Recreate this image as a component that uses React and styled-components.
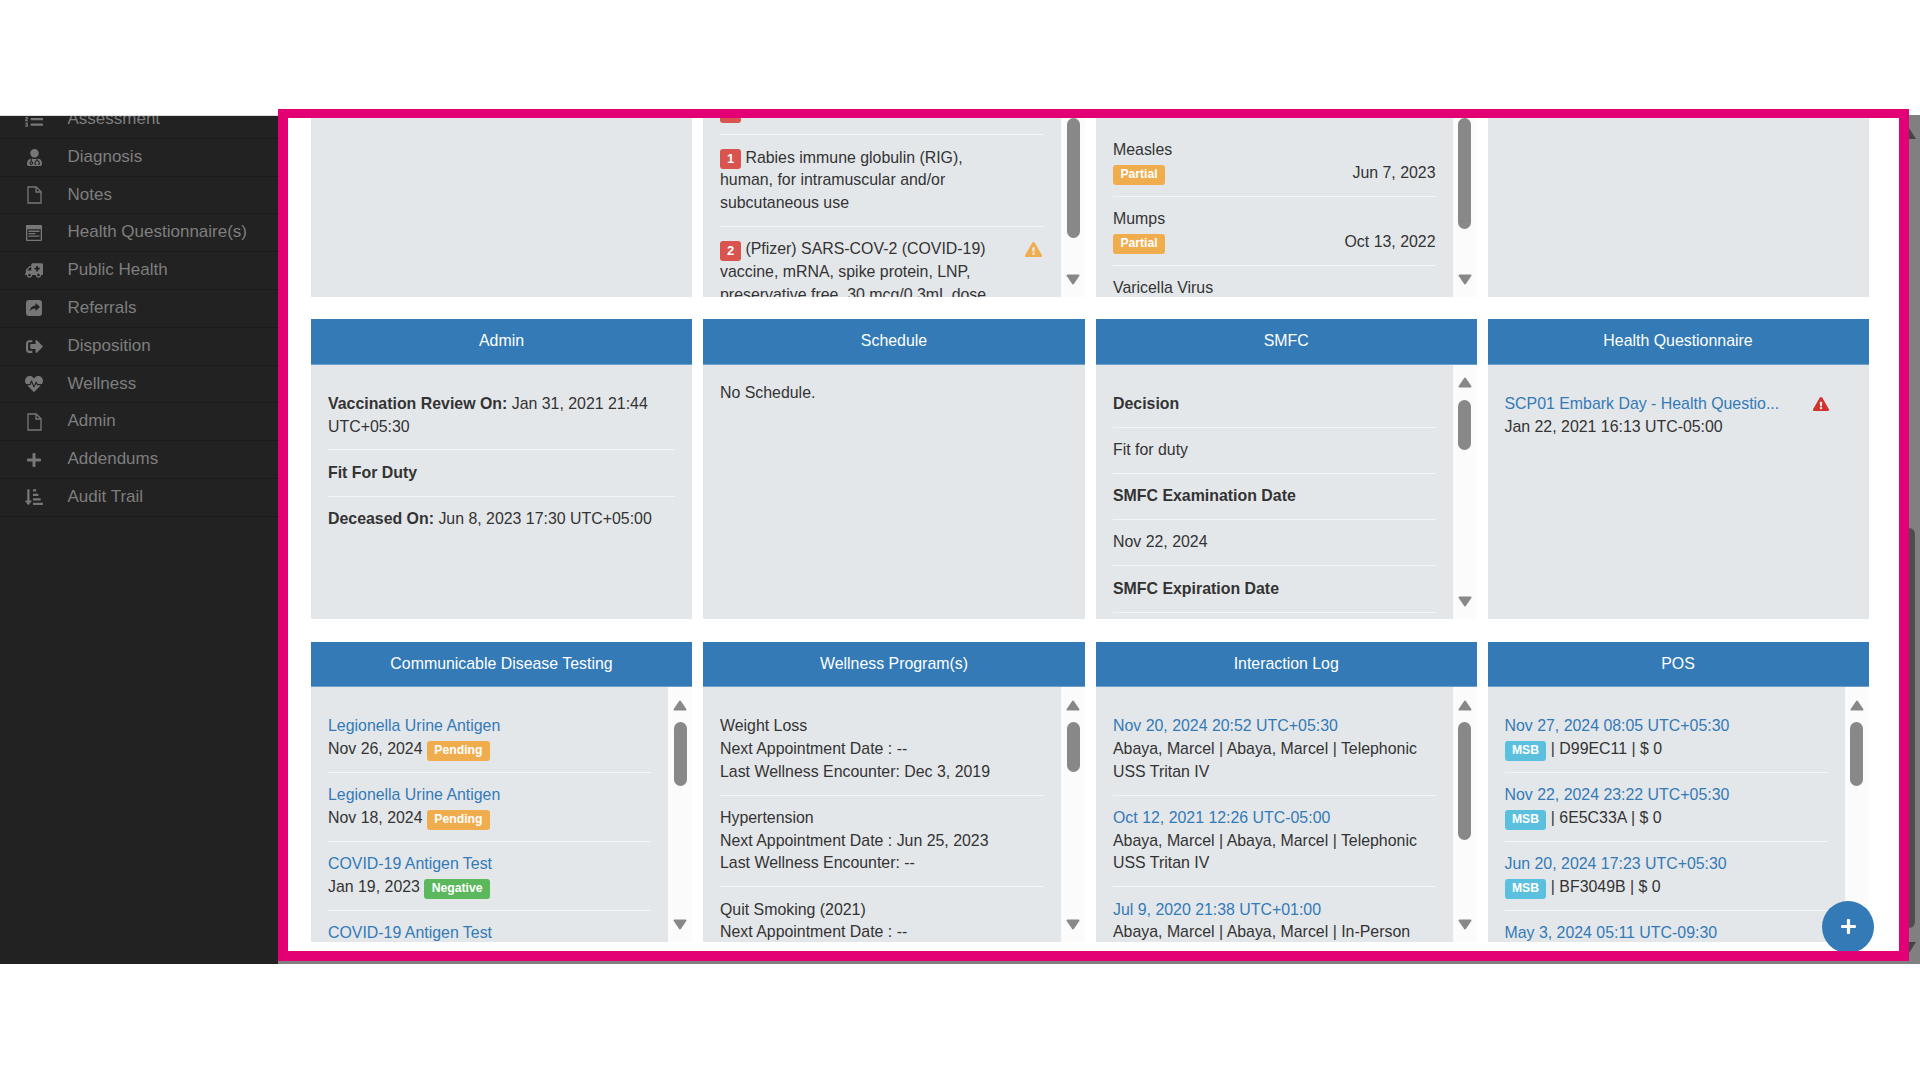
import styled, { createGlobalStyle } from "styled-components";
import {
  FaListOl,
  FaUserMd,
  FaAmbulance,
  FaSignOutAlt,
  FaHeartbeat,
  FaPlus,
  FaSortAmountDownAlt,
  FaExclamationTriangle,
} from "react-icons/fa";

function FileIcon() {
  return (
    <svg width="15" height="18" viewBox="0 0 15 18" fill="none" stroke="currentColor" strokeWidth="1.3">
      <path d="M1 1h8.2L14 5.8V17H1Z" />
      <path d="M9 1v5h5" />
    </svg>
  );
}

function FormIcon() {
  return (
    <svg width="16" height="16" viewBox="0 0 16 16" fill="currentColor">
      <path
        fillRule="evenodd"
        d="M1 0h14a1 1 0 0 1 1 1v14a1 1 0 0 1-1 1H1a1 1 0 0 1-1-1V1a1 1 0 0 1 1-1Zm.3 4.2v10.5h13.4V4.2Z"
      />
      <path d="M2.5 5.5h11v1.4h-11ZM2.5 8h7v1.2h-7ZM2.5 10.4h11v1.4h-11Z" />
    </svg>
  );
}

function ShareIcon() {
  return (
    <svg width="16" height="16" viewBox="0 0 16 16" fill="currentColor">
      <path
        fillRule="evenodd"
        d="M3 0h10a3 3 0 0 1 3 3v10a3 3 0 0 1-3 3H3a3 3 0 0 1-3-3V3a3 3 0 0 1 3-3Zm6.5 3v2.4C6 5.6 4 7.600 3.800 11.500 5 9.300 6.800 8.500 9.500 8.500V11L14 7Z"
      />
    </svg>
  );
}

function MirroredAmbulance() {
  return <FaAmbulance size={19} style={{ transform: "scaleX(-1)" }} />;
}

const menu = [
  { label: "Assessment", icon: <FaListOl size={18} /> },
  { label: "Diagnosis", icon: <FaUserMd size={17} /> },
  { label: "Notes", icon: <FileIcon /> },
  { label: "Health Questionnaire(s)", icon: <FormIcon /> },
  { label: "Public Health", icon: <MirroredAmbulance /> },
  { label: "Referrals", icon: <ShareIcon /> },
  { label: "Disposition", icon: <FaSignOutAlt size={17} /> },
  { label: "Wellness", icon: <FaHeartbeat size={18} /> },
  { label: "Admin", icon: <FileIcon /> },
  { label: "Addendums", icon: <FaPlus size={16} /> },
  { label: "Audit Trail", icon: <FaSortAmountDownAlt size={18} /> },
];

function Arrow({ down }) {
  return (
    <ArrowIcon viewBox="0 0 14 11" $down={down}>
      <path d="M7 1.5 L12.5 9.5 H1.5 Z" />
    </ArrowIcon>
  );
}

function Scroll({ thumb, clipped }) {
  return (
    <Rail>
      {!clipped && <Arrow />}
      <Thumb style={{ height: thumb }} $clipped={clipped} />
      <Arrow down />
    </Rail>
  );
}

function Panel({ title, thumb, clipped, children }) {
  return (
    <Card>
      {title && <CardHead>{title}</CardHead>}
      <CardBody>
        {children}
        {thumb && <Scroll thumb={thumb} clipped={clipped} />}
      </CardBody>
    </Card>
  );
}

export default function App() {
  return (
    <Page>
      <GlobalStyle />
      <Shell>
        <Sidebar>
          <SideList>
            {menu.map((item) => (
              <SideItem key={item.label}>
                <SideIcon>{item.icon}</SideIcon>
                {item.label}
              </SideItem>
            ))}
          </SideList>
        </Sidebar>

        <Main>
          <Content>
            <Board>
              <Panel />

              <Panel thumb={120} clipped>
                <ScrolledList>
                  <Item>
                    <NumberBadge>1</NumberBadge>
                  </Item>
                  <Item>
                    <Wrapped>
                      <NumberBadge>1</NumberBadge> Rabies immune globulin (RIG),
                      human, for intramuscular and/or subcutaneous use
                    </Wrapped>
                  </Item>
                  <Item>
                    <SplitRow $pad={2}>
                      <Wrapped>
                        <NumberBadge>2</NumberBadge> (Pfizer) SARS-COV-2
                        (COVID-19) vaccine, mRNA, spike protein, LNP,
                        preservative free, 30 mcg/0.3mL dose
                      </Wrapped>
                      <WarnIcon $color="#f0ad4e">
                        <FaExclamationTriangle size={17} />
                      </WarnIcon>
                    </SplitRow>
                  </Item>
                </ScrolledList>
              </Panel>

              <Panel thumb={111} clipped>
                <List $top={10}>
                  <Item>
                    Measles
                    <SplitRow>
                      <Label $kind="warning">Partial</Label>
                      <span>Jun 7, 2023</span>
                    </SplitRow>
                  </Item>
                  <Item>
                    Mumps
                    <SplitRow>
                      <Label $kind="warning">Partial</Label>
                      <span>Oct 13, 2022</span>
                    </SplitRow>
                  </Item>
                  <Item>Varicella Virus</Item>
                </List>
              </Panel>

              <Panel />

              <Panel title="Admin">
                <List>
                  <Item>
                    <b>Vaccination Review On:</b> Jan 31, 2021 21:44 UTC+05:30
                  </Item>
                  <Item>
                    <b>Fit For Duty</b>
                  </Item>
                  <Item>
                    <b>Deceased On:</b> Jun 8, 2023 17:30 UTC+05:00
                  </Item>
                </List>
              </Panel>

              <Panel title="Schedule">
                <Plain>No Schedule.</Plain>
              </Panel>

              <Panel title="SMFC" thumb={50}>
                <List>
                  <Item>
                    <b>Decision</b>
                  </Item>
                  <Item>Fit for duty</Item>
                  <Item>
                    <b>SMFC Examination Date</b>
                  </Item>
                  <Item>Nov 22, 2024</Item>
                  <Item>
                    <b>SMFC Expiration Date</b>
                  </Item>
                  <Item />
                </List>
              </Panel>

              <Panel title="Health Questionnaire">
                <List>
                  <Item>
                    <SplitRow $pad={23}>
                      <Link>SCP01 Embark Day - Health Questio...</Link>
                      <WarnIcon $color="#d2322d">
                        <FaExclamationTriangle size={16} />
                      </WarnIcon>
                    </SplitRow>
                    Jan 22, 2021 16:13 UTC-05:00
                  </Item>
                </List>
              </Panel>

              <Panel title="Communicable Disease Testing" thumb={64}>
                <List>
                  <Item>
                    <Link>Legionella Urine Antigen</Link>
                    <div>
                      Nov 26, 2024 <Label $kind="warning">Pending</Label>
                    </div>
                  </Item>
                  <Item>
                    <Link>Legionella Urine Antigen</Link>
                    <div>
                      Nov 18, 2024 <Label $kind="warning">Pending</Label>
                    </div>
                  </Item>
                  <Item>
                    <Link>COVID-19 Antigen Test</Link>
                    <div>
                      Jan 19, 2023 <Label $kind="success">Negative</Label>
                    </div>
                  </Item>
                  <Item>
                    <Link>COVID-19 Antigen Test</Link>
                  </Item>
                </List>
              </Panel>

              <Panel title="Wellness Program(s)" thumb={50}>
                <List>
                  <Item>
                    Weight Loss
                    <br />
                    Next Appointment Date : --
                    <br />
                    Last Wellness Encounter: Dec 3, 2019
                  </Item>
                  <Item>
                    Hypertension
                    <br />
                    Next Appointment Date : Jun 25, 2023
                    <br />
                    Last Wellness Encounter: --
                  </Item>
                  <Item>
                    Quit Smoking (2021)
                    <br />
                    Next Appointment Date : --
                  </Item>
                </List>
              </Panel>

              <Panel title="Interaction Log" thumb={118}>
                <List>
                  <Item>
                    <Link>Nov 20, 2024 20:52 UTC+05:30</Link>
                    <br />
                    Abaya, Marcel | Abaya, Marcel | Telephonic
                    <br />
                    USS Tritan IV
                  </Item>
                  <Item>
                    <Link>Oct 12, 2021 12:26 UTC-05:00</Link>
                    <br />
                    Abaya, Marcel | Abaya, Marcel | Telephonic
                    <br />
                    USS Tritan IV
                  </Item>
                  <Item>
                    <Link>Jul 9, 2020 21:38 UTC+01:00</Link>
                    <br />
                    Abaya, Marcel | Abaya, Marcel | In-Person
                  </Item>
                </List>
              </Panel>

              <Panel title="POS" thumb={64}>
                <List>
                  <Item>
                    <Link>Nov 27, 2024 08:05 UTC+05:30</Link>
                    <div>
                      <Label $kind="info">MSB</Label> | D99EC11 | $ 0
                    </div>
                  </Item>
                  <Item>
                    <Link>Nov 22, 2024 23:22 UTC+05:30</Link>
                    <div>
                      <Label $kind="info">MSB</Label> | 6E5C33A | $ 0
                    </div>
                  </Item>
                  <Item>
                    <Link>Jun 20, 2024 17:23 UTC+05:30</Link>
                    <div>
                      <Label $kind="info">MSB</Label> | BF3049B | $ 0
                    </div>
                  </Item>
                  <Item>
                    <Link>May 3, 2024 05:11 UTC-09:30</Link>
                  </Item>
                </List>
              </Panel>
            </Board>
          </Content>

          <PageRail>
            <PageArrowUp />
            <PageThumb />
            <PageArrowDown />
          </PageRail>

          <Fab>
            <FaPlus size={17} />
          </Fab>
          <Highlight />
        </Main>
      </Shell>
    </Page>
  );
}

const labelColors = {
  warning: "#f0ad4e",
  success: "#5cb85c",
  info: "#5bc0de",
};

const GlobalStyle = createGlobalStyle`
  html, body {
    margin: 0;
    height: 100%;
    overflow: hidden;
    background: #fff;
  }
  body {
    font-family: "Liberation Sans", Arial, sans-serif;
    font-size: 15.9px;
    line-height: 22.7px;
    color: #333;
  }
`;

const Page = styled.div`
  height: 1080px;
  padding-top: 115px;
  box-sizing: border-box;
`;

const Shell = styled.div`
  display: flex;
  height: 849px;
`;

const Sidebar = styled.aside`
  width: 278px;
  flex: none;
  overflow: hidden;
  box-sizing: border-box;
  border-top: 1px solid #ddd;
  background: #222;
`;

const SideList = styled.ul`
  list-style: none;
  margin: -15px 0 0;
  padding: 0;
`;

const SideItem = styled.li`
  display: flex;
  align-items: center;
  gap: 24.5px;
  height: 37.8px;
  padding-left: 25px;
  box-sizing: border-box;
  border-bottom: 1px solid #1b1b1b;
  font-size: 17px;
  color: #7e7e7e;
`;

const SideIcon = styled.span`
  display: flex;
  justify-content: center;
  width: 18px;
  color: #777;
`;

const Main = styled.main`
  position: relative;
  flex: 1;
  display: flex;
  align-items: flex-start;
  background: #808080;
`;

const Content = styled.div`
  flex: 1;
  height: 846px;
  padding: 3px 40.5px 0 33px;
  box-sizing: border-box;
  overflow: hidden;
  background: #fff;
`;

const Board = styled.div`
  display: grid;
  grid-template-columns: 381px 382px 380.5px 381px;
  grid-template-rows: 178.7px 300px 300px;
  column-gap: 11px;
  row-gap: 22.6px;
`;

const Card = styled.section`
  display: flex;
  flex-direction: column;
  min-width: 0;
  overflow: hidden;
  background: #e4e7ea;
`;

const CardHead = styled.header`
  flex: none;
  height: 45.5px;
  line-height: 43.5px;
  text-align: center;
  color: #fff;
  background: #337ab7;
  border-bottom: 1px solid #6f9fcb;
  box-sizing: border-box;
`;

const CardBody = styled.div`
  flex: 1;
  display: flex;
  min-height: 0;
`;

const List = styled.ul`
  flex: 1;
  min-width: 0;
  list-style: none;
  margin: 0;
  padding: ${(p) => p.$top ?? 16.8}px 17px 0;
  overflow: hidden;
`;

const ScrolledList = styled(List)`
  padding-top: 0;
  margin-top: -28.8px;
`;

const Item = styled.li`
  padding: 11.25px 0;

  & + & {
    border-top: 1px solid #f3f5f6;
  }
`;

const Plain = styled.p`
  margin: 0;
  padding: 17px;
`;

const Link = styled.span`
  color: #337ab7;
`;

const Wrapped = styled.div`
  width: 285px;
`;

const SplitRow = styled.div`
  display: flex;
  justify-content: space-between;
  align-items: baseline;
  padding-right: ${(p) => p.$pad ?? 0}px;
`;

const WarnIcon = styled.span`
  display: flex;
  align-self: flex-start;
  margin-top: 3px;
  color: ${(p) => p.$color};
`;

const Label = styled.span`
  display: inline-block;
  padding: 3px 7.4px 4px;
  margin-bottom: -2px;
  font-size: 12.2px;
  font-weight: 700;
  line-height: 13px;
  color: #fff;
  border-radius: 3px;
  background: ${(p) => labelColors[p.$kind]};
`;

const NumberBadge = styled.span`
  display: inline-block;
  width: 21px;
  height: 20px;
  margin-bottom: -2px;
  line-height: 20px;
  vertical-align: -0.6px;
  text-align: center;
  font-size: 13px;
  font-weight: 700;
  color: #fff;
  border-radius: 3px;
  background: #d9534f;
`;

const Rail = styled.div`
  flex: none;
  display: flex;
  flex-direction: column;
  align-items: center;
  width: 24px;
  padding: 12.5px 0 12px;
  box-sizing: border-box;
  background: #fbfbfb;
`;

const ArrowIcon = styled.svg`
  flex: none;
  width: 14px;
  height: 11px;
  margin-top: ${(p) => (p.$down ? "auto" : "0")};
  transform: ${(p) => (p.$down ? "rotate(180deg)" : "none")};
  fill: #888;
  stroke: #888;
  stroke-width: 2;
  stroke-linejoin: round;
`;

const Thumb = styled.div`
  flex: none;
  width: 13px;
  margin-top: ${(p) => (p.$clipped ? "-12.5px" : "11.5px")};
  border-radius: 6.5px;
  background: #888;
`;

const PageRail = styled.div`
  flex: none;
  display: flex;
  flex-direction: column;
  width: 11px;
  height: 849px;
  padding-top: 13px;
  box-sizing: border-box;
  overflow: hidden;
`;

const PageArrowUp = styled.div`
  flex: none;
  width: 0;
  height: 0;
  margin-left: -7px;
  border-left: 7px solid transparent;
  border-right: 7px solid transparent;
  border-bottom: 11px solid #444;
`;

const PageThumb = styled.div`
  flex: none;
  width: 6px;
  height: 400px;
  margin-top: 389px;
  border-radius: 0 6px 6px 0;
  background: #4d4d4d;
`;

const PageArrowDown = styled.div`
  flex: none;
  width: 0;
  height: 0;
  margin: 14px 0 0 -7px;
  border-left: 7px solid transparent;
  border-right: 7px solid transparent;
  border-top: 11px solid #444;
`;

const Fab = styled.button`
  position: absolute;
  left: 1544px;
  top: 785.5px;
  display: flex;
  align-items: center;
  justify-content: center;
  width: 52px;
  height: 52px;
  padding: 0;
  border: 0;
  border-radius: 50%;
  color: #fff;
  background: #337ab7;
`;

const Highlight = styled.div`
  position: absolute;
  left: -0.5px;
  top: -6px;
  width: 1631px;
  height: 852px;
  box-sizing: border-box;
  border: 10px solid #e20074;
  border-top-width: 9px;
  pointer-events: none;
`;
